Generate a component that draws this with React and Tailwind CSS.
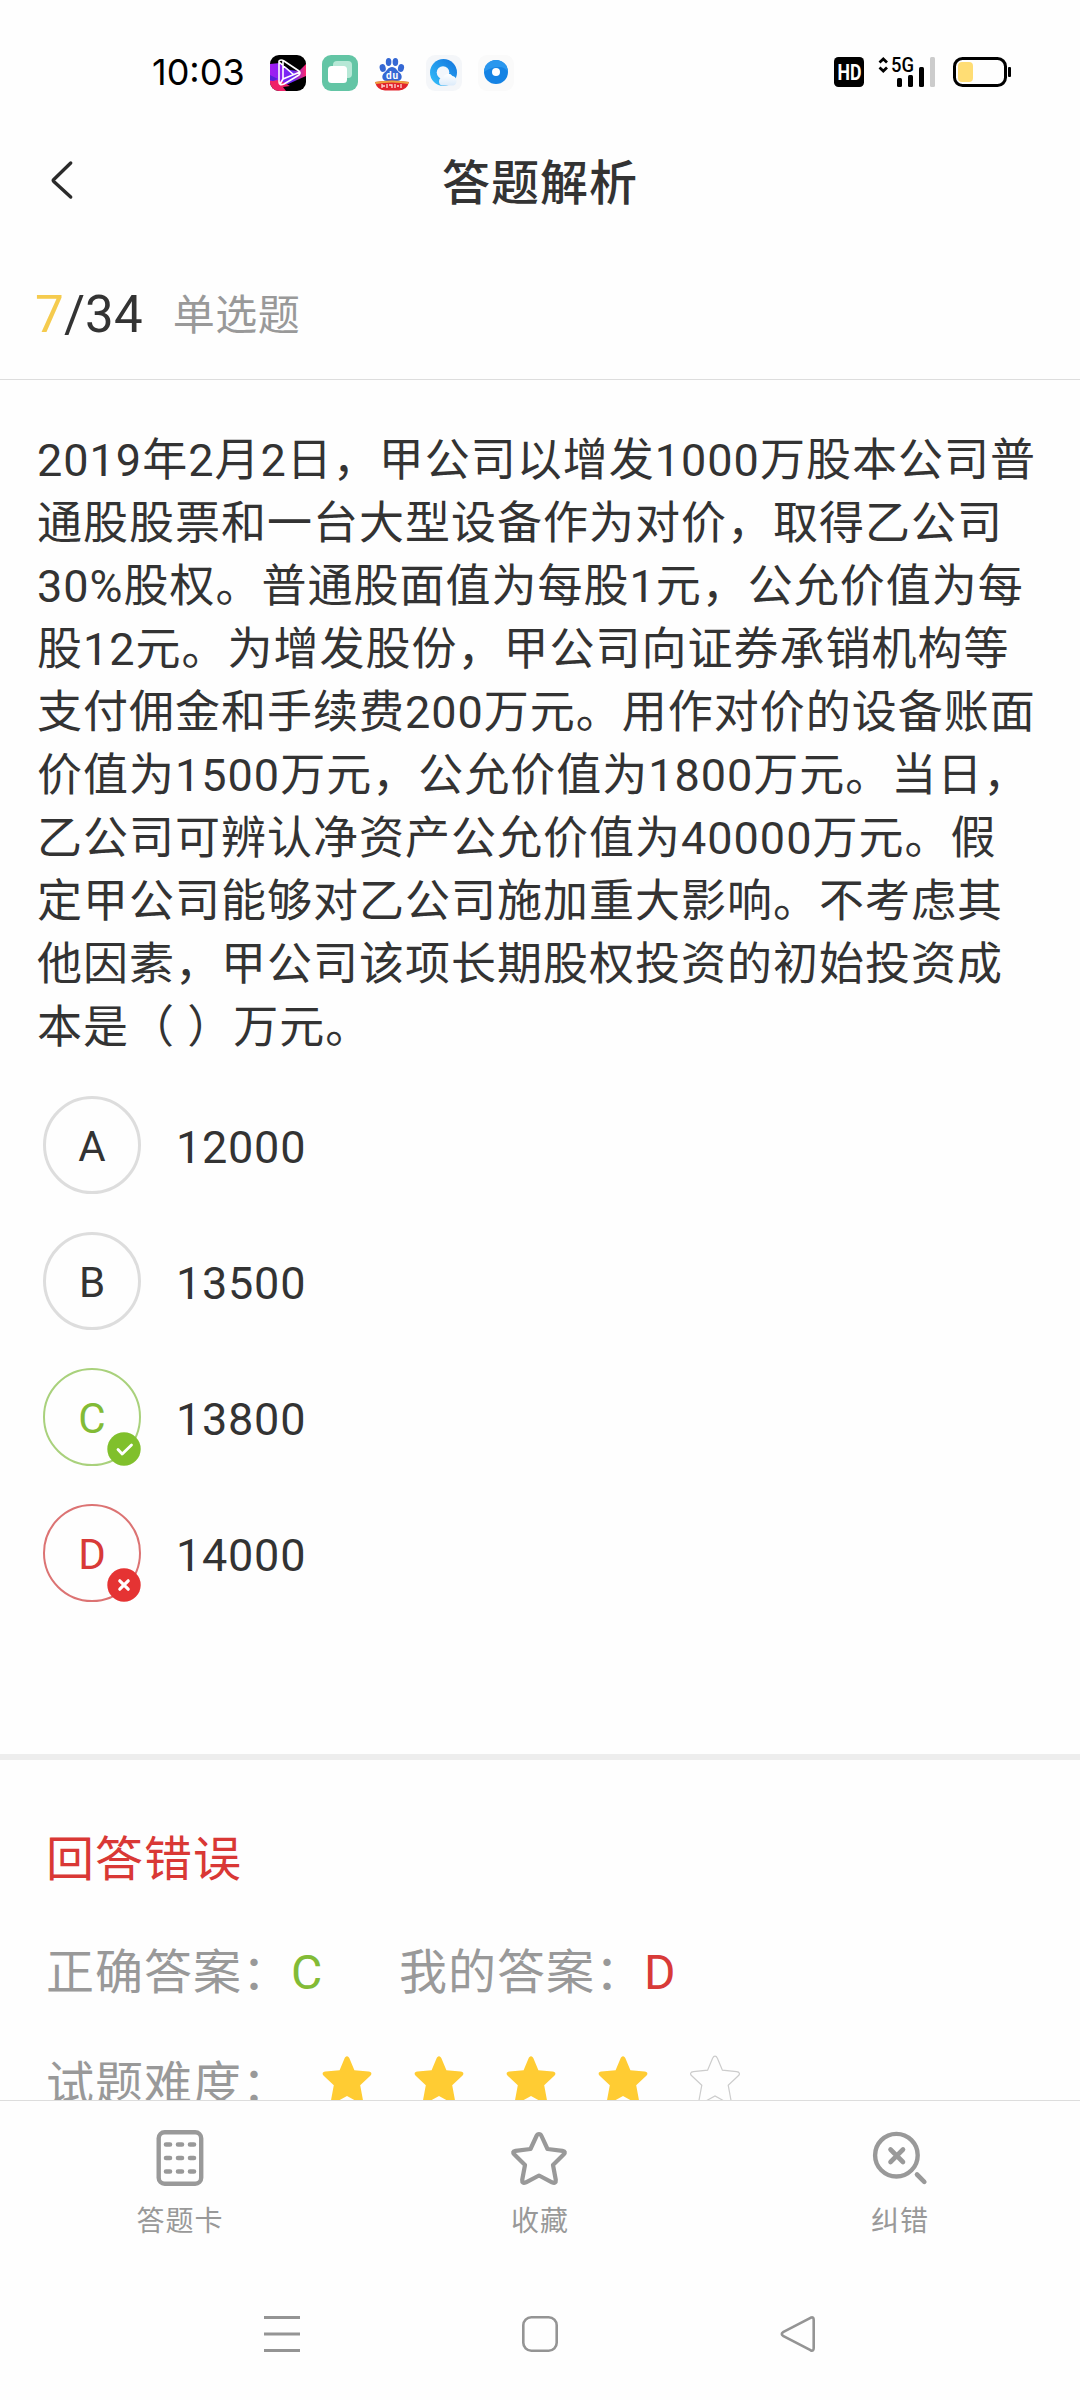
import React from "react";

const QUESTION_LINES = [
  "2019年2月2日，甲公司以增发1000万股本公司普",
  "通股股票和一台大型设备作为对价，取得乙公司",
  "30%股权。普通股面值为每股1元，公允价值为每",
  "股12元。为增发股份，甲公司向证券承销机构等",
  "支付佣金和手续费200万元。用作对价的设备账面",
  "价值为1500万元，公允价值为1800万元。当日，",
  "乙公司可辨认净资产公允价值为40000万元。假",
  "定甲公司能够对乙公司施加重大影响。不考虑其",
  "他因素，甲公司该项长期股权投资的初始投资成",
  "本是（ ）万元。",
];

const OPTIONS = [
  { letter: "A", text: "12000" },
  { letter: "B", text: "13500" },
  { letter: "C", text: "13800", state: "right" },
  { letter: "D", text: "14000", state: "wrong" },
];

const STAR =
  "M25 2.2 C26.2 2.2 26.9 3.2 27.4 4.3 L32.4 16.2 L46.6 17.6 C49.6 17.9 50.2 20 48.3 21.8 L38.2 31.2 L41 46.3 C41.5 49 39.6 50 37.4 48.8 L25 42 L12.6 48.8 C10.4 50 8.5 49 9 46.3 L11.8 31.2 L1.7 21.8 C-0.2 20 0.4 17.9 3.4 17.6 L17.6 16.2 L22.6 4.3 C23.1 3.2 23.8 2.2 25 2.2 Z";

function AppIcons() {
  return (
    <div className="flex gap-4">
      <svg width="36" height="36" viewBox="0 0 36 36">
        <defs>
          <clipPath id="tile"><rect width="36" height="36" rx="9" /></clipPath>
          <linearGradient id="paint" x1="0" x2="1" y1="0" y2="0">
            <stop offset="0" stopColor="#a31bf0" />
            <stop offset=".65" stopColor="#6a2af5" />
            <stop offset="1" stopColor="#ff2a6c" />
          </linearGradient>
        </defs>
        <g clipPath="url(#tile)">
          <rect width="36" height="36" fill="#000" />
          <path d="M0 9 L10 8 L20 15 L29 16 L36 9 V21 L27 25 L16 30 L0 29Z" fill="url(#paint)" />
          <path d="M0 26 L9 25 L20 31 L13 32 L16 36 H0Z" fill="#ef2268" />
          <path d="M0 20 L8 24 L3 26 L0 25Z" fill="#5420d8" />
        </g>
        <path d="M9 6 Q11 4 14 6 L29 16 Q31 18 29 20 L14 29 Q9 31 9 27Z M13 6 V24 L30 17 M9 7 L24 20 M13 24 L10 29" fill="none" stroke="#fff" strokeWidth="1.6" strokeLinejoin="round" />
      </svg>
      <svg width="36" height="36" viewBox="0 0 36 36">
        <rect width="36" height="36" rx="9" fill="#63c5a5" />
        <rect x="11" y="6" width="19" height="17" rx="4" fill="#b6e8d6" />
        <rect x="6" y="11" width="19" height="17" rx="3.5" fill="#fff" />
      </svg>
      <svg width="36" height="36" viewBox="0 0 36 36">
        <g fill="#3568d4">
          <ellipse cx="8.7" cy="13" rx="3" ry="4" transform="rotate(-15 8.7 13)" />
          <ellipse cx="14.6" cy="7" rx="2.8" ry="4" />
          <ellipse cx="21.4" cy="7" rx="2.8" ry="4" />
          <ellipse cx="27" cy="13" rx="3" ry="4" transform="rotate(15 27 13)" />
          <path d="M18 12 C22 12 23 16 26 18 C29 21 28 26 23 26 H13 C8 26 7 21 10 18 C13 16 14 12 18 12Z" />
        </g>
        <text x="12" y="23.5" textLength="12" fontSize="10" fontWeight="700" fill="#fff" fontFamily="Roboto, sans-serif">du</text>
        <path d="M1 27 Q18 24 35 27 Q33 35 25 35.5 H11 Q3 35 1 27Z" fill="#e2242c" />
        <path d="M1 27 Q18 24 35 27 L34 29 Q18 26 2 29Z" fill="#eea23f" />
        <path d="M8 29 V33 M8 31 H11 M13 29 V33 M15 30 H18 V33 M21 29 V33 M23 31 H25 M27 29 V33" stroke="#ffd9d4" strokeWidth="1.3" fill="none" />
      </svg>
      <svg width="36" height="36" viewBox="0 0 36 36">
        <defs>
          <linearGradient id="ring" x1="0" x2="1" y1="1" y2="0">
            <stop offset="0" stopColor="#35c2fb" />
            <stop offset="1" stopColor="#1272dd" />
          </linearGradient>
          <linearGradient id="cloud" x1="0" x2="0" y1="0" y2="1">
            <stop offset="0" stopColor="#fff" />
            <stop offset="1" stopColor="#dcebfa" />
          </linearGradient>
        </defs>
        <rect width="36" height="36" rx="9" fill="#f4f6f9" />
        <circle cx="17.5" cy="17.5" r="13.5" fill="url(#ring)" />
        <circle cx="17" cy="17.5" r="6.3" fill="#f3f7fc" />
        <path d="M17 30.5 a4 4 0 0 1 0-8 a5.5 5.5 0 0 1 9.5-1.5 a5 5 0 0 1 1 9.5Z" fill="url(#cloud)" />
      </svg>
      <svg width="36" height="36" viewBox="0 0 36 36">
        <rect width="36" height="36" rx="9" fill="#fafafa" />
        <circle cx="18" cy="17" r="12" fill="#1583e4" />
        <path d="M6 17 a12 12 0 0 1 24 0 q-3-5-9-5 q-8 0-15 5Z" fill="#2a97ee" />
        <circle cx="18" cy="17" r="4" fill="#fff" />
      </svg>
    </div>
  );
}

function StatusBar() {
  return (
    <div className="flex h-[110px] shrink-0 items-start pt-[55px]">
      <div className="ml-[152px] w-[118px] whitespace-nowrap font-[Inter,sans-serif] text-[36px] leading-[34px] text-black">10:03</div>
      <AppIcons />
      <svg className="ml-auto mr-[67px]" width="180" height="36" viewBox="0 0 180 36">
        <rect x="1" y="2" width="30" height="30" rx="4.5" fill="#000" />
        <text x="4.5" y="25" textLength="24" lengthAdjust="spacingAndGlyphs" fontSize="22" fontWeight="700" fill="#fff" fontFamily="Roboto, sans-serif">HD</text>
        <path d="M46.5 7.5 L50.3 4 L54 7.5 M46.5 12.5 L50.3 16 L54 12.5" fill="none" stroke="#000" strokeWidth="2.8" />
        <text x="58" y="17" textLength="23" lengthAdjust="spacingAndGlyphs" fontSize="20" fontWeight="500" fill="#000" fontFamily="Roboto, sans-serif">5G</text>
        <rect x="64" y="23" width="5" height="9" rx="1.5" />
        <rect x="75" y="20" width="5" height="12" rx="1.5" />
        <rect x="86" y="12" width="5" height="20" rx="1.5" />
        <rect x="97" y="2" width="5" height="30" rx="1.5" fill="#ccc" />
        <rect x="121.5" y="3.5" width="51" height="27" rx="8" fill="none" stroke="#000" strokeWidth="3" />
        <rect x="125" y="7" width="15" height="20" rx="4" fill="#ffdd74" />
        <rect x="175" y="12" width="3" height="10" rx="1" />
      </svg>
    </div>
  );
}

function OptionRow({ letter, text, state }) {
  const ring =
    state === "right"
      ? "border-2 border-[#a9d17c] text-[#82bb36]"
      : state === "wrong"
        ? "border-2 border-[#dc7373] text-[#d83a38]"
        : "border-3 border-[#dddddd] text-[#333333]";
  return (
    <div className="flex h-[136px] items-start">
      <div className={"relative flex size-[98px] items-center justify-center rounded-full pt-[4px] text-[42px] leading-none " + ring}>
        {letter}
        {state && (
          <svg className="absolute -bottom-[2px] -right-[2px]" width="34" height="34" viewBox="0 0 34 34">
            <circle cx="17" cy="17" r="16.7" fill={state === "right" ? "#80c02c" : "#e53333"} />
            {state === "right" ? (
              <path d="M11 17.5 L15.2 22 L24.5 13" fill="none" stroke="#fff" strokeWidth="2.8" strokeLinecap="round" strokeLinejoin="round" />
            ) : (
              <path d="M12.8 12.8 L21.2 21.2 M21.2 12.8 L12.8 21.2" fill="none" stroke="#fff" strokeWidth="3.2" strokeLinecap="round" />
            )}
          </svg>
        )}
      </div>
      <div className="ml-[35px] pt-[4px] text-[45px] leading-[96px] tracking-[0.75px]">{text}</div>
    </div>
  );
}

function Tab({ label, children }) {
  return (
    <div className="flex w-[360px] flex-col items-center pt-[27px] text-[#999999]">
      <svg width="60" height="60" viewBox="0 0 60 60" fill="none" stroke="#999999">{children}</svg>
      <div className="mt-[13px] text-[28px] leading-[42px] tracking-[1px]">{label}</div>
    </div>
  );
}

export default function App() {
  return (
    <div lang="zh-CN" className="flex h-[2400px] w-[1080px] flex-col overflow-hidden bg-[#fefefe] font-[Roboto,'Noto_Sans_CJK_SC',sans-serif] text-[#333333]">
      <StatusBar />

      <header className="grid h-[142px] shrink-0 grid-cols-[120px_1fr_120px] items-center">
        <svg className="ml-[48px]" width="28" height="42" viewBox="0 0 28 42">
          <path d="M22.7 3 L5.8 19.5 Q4.8 20.5 5.8 21.5 L22.7 37" fill="none" stroke="#2b2b2b" strokeWidth="3.4" strokeLinecap="round" />
        </svg>
        <h1 className="pt-[5px] text-center text-[48px] font-medium leading-[60px] tracking-[1px]">答题解析</h1>
      </header>

      <div className="flex h-[128px] shrink-0 items-center border-b border-[#dddddd] pl-[35px] pb-[1px]">
        <div className="text-[51px] leading-[60px] tracking-[0.2px]">
          <span className="text-[#f5cb4e]">7</span>/34
        </div>
        <div className="ml-[30px] pt-[1px] text-[42px] leading-[60px] tracking-[0.5px] text-[#999999]">单选题</div>
      </div>

      <main className="h-[1374px] shrink-0 pl-[36px] pt-[49px]">
        <div className="whitespace-nowrap pl-[1px] text-[45px] leading-[63px] tracking-[1px]">
          {QUESTION_LINES.map((line) => (
            <p key={line}>{line}</p>
          ))}
        </div>
        <div className="mt-[37px] pl-[7px]">
          {OPTIONS.map((o) => (
            <OptionRow key={o.letter} {...o} />
          ))}
        </div>
      </main>

      <section className="h-[346px] shrink-0 overflow-hidden border-t-[6px] border-[#ededed] pl-[46px] pt-[64px] text-[48px] leading-[72px] tracking-[1px]">
        <div className="text-[#d93835]">回答错误</div>
        <div className="mt-[41px] flex text-[#999999]">
          <div className="w-[353px]">正确答案：<span className="text-[#82bb36]">C</span></div>
          <div>我的答案：<span className="text-[#d83a38]">D</span></div>
        </div>
        <div className="mt-[40px] flex text-[#999999]">
          <div className="w-[276px]">试题难度：</div>
          <div className="flex gap-[42px]">
            {[1, 2, 3, 4, 5].map((n) => (
              <svg key={n} className="mt-[5px]" width="50" height="52" viewBox="0 0 50 52">
                <path d={STAR} fill={n < 5 ? "#ffcc33" : "none"} stroke={n < 5 ? "none" : "#cccccc"} strokeWidth="1.2" />
              </svg>
            ))}
          </div>
        </div>
      </section>

      <footer className="flex h-[157px] shrink-0 border-t border-[#dddddd]">
        <Tab label="答题卡">
          <rect x="8.7" y="4.2" width="42.5" height="51.5" rx="6" strokeWidth="4.4" />
          <path d="M16 16.5 H20 M28 16.5 H32 M40 16.5 H44 M16 30 H20 M28 30 H32 M40 30 H44 M16 43.5 H20 M28 43.5 H32 M40 43.5 H44" strokeWidth="4.6" strokeLinecap="round" />
        </Tab>
        <Tab label="收藏">
          <path d="M29 6 Q30.6 6 31.5 8 L37.5 21 L52.5 22.8 Q56.5 23.5 53.6 26.6 L43 37 L45.8 52 Q46.2 56 42 54.3 L29 47.5 L16 54.3 Q11.8 56 12.2 52 L15 37 L4.4 26.6 Q1.5 23.5 5.5 22.8 L20.5 21 L26.5 8 Q27.4 6 29 6Z" strokeWidth="4.2" strokeLinejoin="round" />
        </Tab>
        <Tab label="纠错">
          <circle cx="26.4" cy="27.2" r="21.3" strokeWidth="4.4" />
          <path d="M20.5 21.5 L33 34 M33 21.5 L20.5 34 M47 46.5 L54.3 53.8" strokeWidth="4.6" strokeLinecap="round" />
        </Tab>
      </footer>

      <nav className="flex flex-1 items-start justify-center gap-[216px] pt-[56px]">
        <svg width="42" height="42" viewBox="0 0 42 42" fill="none" stroke="#949494" strokeWidth="3">
          <path d="M3 4.5 H39 M3 21 H39 M3 37.5 H39" />
        </svg>
        <svg width="42" height="42" viewBox="0 0 42 42" fill="none" stroke="#949494" strokeWidth="2.6">
          <rect x="4.3" y="4.3" width="33.4" height="33.4" rx="8" />
        </svg>
        <svg width="42" height="42" viewBox="0 0 42 42" fill="none" stroke="#949494" strokeWidth="2.6">
          <path d="M33.5 4.8 Q36.7 3.4 36.7 7 V35 Q36.7 38.6 33.5 37.2 L6 22.8 Q3.6 21 6 19.2Z" strokeLinejoin="round" />
        </svg>
      </nav>
    </div>
  );
}
